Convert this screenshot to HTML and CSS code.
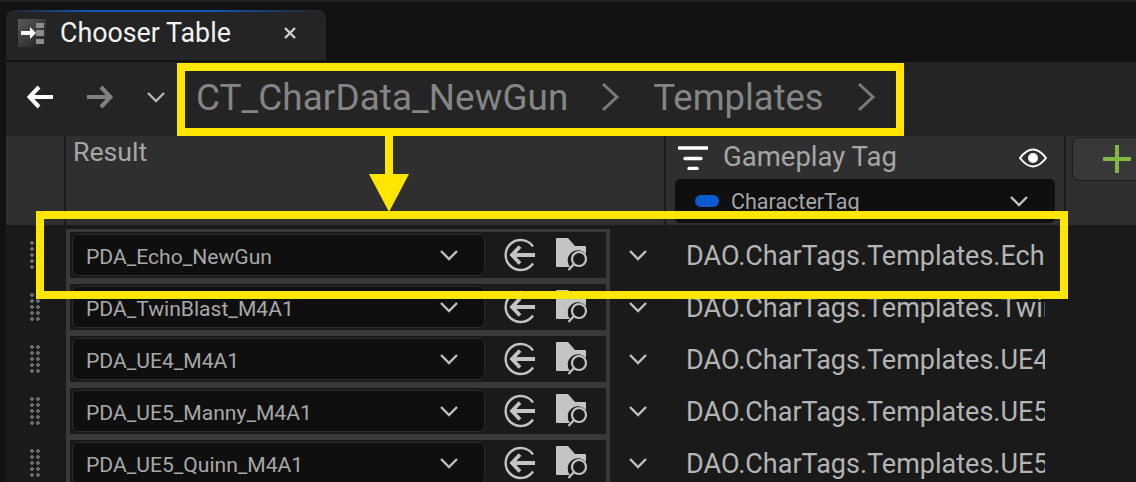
FILE: index.html
```html
<!DOCTYPE html>
<html lang="en">

<head>
    <meta charset="UTF-8">
    <title>Chooser Table</title>
    <link rel="stylesheet" href="styles.css">
</head>

<body>
    <svg class="defs" width="0" height="0">
        <symbol id="chev" viewBox="0 0 20 12">
            <path d="M2 2l8 8 8-8" fill="none" stroke="currentColor" stroke-width="2.4" />
        </symbol>
        <symbol id="use-sel" viewBox="0 0 32 34">
            <path d="M29 8.500A15 15 0 1 0 29 25.500" fill="none" stroke="currentColor" stroke-width="2.400" />
            <path d="M16 8.500L8 17l8 8.500M9 17H31" fill="none" stroke="currentColor" stroke-width="3.800" />
        </symbol>
        <symbol id="browse" viewBox="0 0 32 34">
            <path d="M0 1q0-1 1-1h11l7 8h10q1 0 1 1v7a10 10 0 0 0-16 13H1q-1 0-1-1z" fill="currentColor" />
            <circle cx="23" cy="21" r="7" fill="none" stroke="currentColor" stroke-width="2.200" />
            <path d="M18 26l-5.500 6" fill="none" stroke="currentColor" stroke-width="2.200" />
        </symbol>
    </svg>

    <div class="top-strip"></div>
    <div class="tabbar">
        <div class="tab">
            <svg class="tab-icon" viewBox="0 0 28 28">
                <defs>
                    <linearGradient id="tabg" x1="0" y1="0" x2="1" y2="1">
                        <stop offset="0" stop-color="#5a5a5a" />
                        <stop offset="1" stop-color="#1e1e1e" />
                    </linearGradient>
                </defs>
                <rect width="28" height="28" fill="url(#tabg)" />
                <path d="M18 4h8v5h-8zM18 11h8v6h-8zM18 20h8v5h-8z" fill="#8c8c8c" />
                <path d="M3 12h9V8l6 6-6 6v-4H3z" fill="#fff" />
            </svg>
            <span class="tab-title">Chooser Table</span>
            <svg class="tab-close" viewBox="0 0 14 14">
                <path d="M2 2l10 10M12 2L2 12" stroke="#cfcfcf" stroke-width="2.400" />
            </svg>
        </div>
    </div>

    <div class="main">
        <div class="toolbar">
            <svg class="nav-arrow back" viewBox="0 0 26 24">
                <path d="M12 2L2.500 12l9.500 10M3 12h23" fill="none" stroke="currentColor" stroke-width="4" />
            </svg>
            <svg class="nav-arrow forward" viewBox="0 0 26 24">
                <path d="M14 2l9.500 10L14 22M23 12H0" fill="none" stroke="currentColor" stroke-width="4" />
            </svg>
            <svg class="nav-chev">
                <use href="#chev" />
            </svg>
            <span class="crumb first">CT_CharData_NewGun</span>
            <svg class="crumb-sep" viewBox="0 0 20 30">
                <path d="M3 2l14 13L3 28" fill="none" stroke="currentColor" stroke-width="3" />
            </svg>
            <span class="crumb">Templates</span>
            <svg class="crumb-sep" viewBox="0 0 20 30">
                <path d="M3 2l14 13L3 28" fill="none" stroke="currentColor" stroke-width="3" />
            </svg>
        </div>

        <div class="header">
            <div class="head-gutter"></div>
            <div class="head-result">Result</div>
            <div class="head-tag">
                <div class="head-tag-top">
                    <svg class="filter-icon" viewBox="0 0 30 24">
                        <path d="M1 2h28M7 12.500h16M11 22.500h8" fill="none" stroke="#fff" stroke-width="3.400" stroke-linecap="round" />
                    </svg>
                    <span class="head-tag-label">Gameplay Tag</span>
                    <svg class="eye-icon" viewBox="0 0 28 20">
                        <path d="M1 10Q14-7 27 10 14 27 1 10z" fill="none" stroke="#fff" stroke-width="2" />
                        <circle cx="14" cy="10" r="5" fill="#fff" />
                    </svg>
                </div>
                <div class="tag-combo">
                    <span class="tag-pill"></span>
                    <span class="tag-name">CharacterTag</span>
                    <svg class="combo-chev">
                        <use href="#chev" />
                    </svg>
                </div>
            </div>
            <div class="head-add">
                <div class="add-btn">
                    <svg class="plus-icon" viewBox="0 0 28 28">
                        <path d="M14 1v26M1 14h26" stroke="#80b843" stroke-width="4" stroke-linecap="round" />
                    </svg>
                </div>
            </div>
        </div>

        <div class="rows">
            <div class="row">
                <div class="gutter"><span class="grip"></span></div>
                <div class="result-cell">
                    <div class="asset-combo">
                        <span class="asset-name">PDA_Echo_NewGun</span>
                        <svg class="combo-chev"><use href="#chev" /></svg>
                    </div>
                    <svg class="use-icon"><use href="#use-sel" /></svg>
                    <svg class="browse-icon"><use href="#browse" /></svg>
                </div>
                <svg class="row-chev"><use href="#chev" /></svg>
                <div class="tag-text">DAO.CharTags.Templates.Echo</div>
            </div>
            <div class="row">
                <div class="gutter"><span class="grip"></span></div>
                <div class="result-cell">
                    <div class="asset-combo">
                        <span class="asset-name">PDA_TwinBlast_M4A1</span>
                        <svg class="combo-chev"><use href="#chev" /></svg>
                    </div>
                    <svg class="use-icon"><use href="#use-sel" /></svg>
                    <svg class="browse-icon"><use href="#browse" /></svg>
                </div>
                <svg class="row-chev"><use href="#chev" /></svg>
                <div class="tag-text">DAO.CharTags.Templates.TwinBlast</div>
            </div>
            <div class="row">
                <div class="gutter"><span class="grip"></span></div>
                <div class="result-cell">
                    <div class="asset-combo">
                        <span class="asset-name">PDA_UE4_M4A1</span>
                        <svg class="combo-chev"><use href="#chev" /></svg>
                    </div>
                    <svg class="use-icon"><use href="#use-sel" /></svg>
                    <svg class="browse-icon"><use href="#browse" /></svg>
                </div>
                <svg class="row-chev"><use href="#chev" /></svg>
                <div class="tag-text">DAO.CharTags.Templates.UE4_M4A1</div>
            </div>
            <div class="row">
                <div class="gutter"><span class="grip"></span></div>
                <div class="result-cell">
                    <div class="asset-combo">
                        <span class="asset-name">PDA_UE5_Manny_M4A1</span>
                        <svg class="combo-chev"><use href="#chev" /></svg>
                    </div>
                    <svg class="use-icon"><use href="#use-sel" /></svg>
                    <svg class="browse-icon"><use href="#browse" /></svg>
                </div>
                <svg class="row-chev"><use href="#chev" /></svg>
                <div class="tag-text">DAO.CharTags.Templates.UE5_Manny</div>
            </div>
            <div class="row">
                <div class="gutter"><span class="grip"></span></div>
                <div class="result-cell">
                    <div class="asset-combo">
                        <span class="asset-name">PDA_UE5_Quinn_M4A1</span>
                        <svg class="combo-chev"><use href="#chev" /></svg>
                    </div>
                    <svg class="use-icon"><use href="#use-sel" /></svg>
                    <svg class="browse-icon"><use href="#browse" /></svg>
                </div>
                <svg class="row-chev"><use href="#chev" /></svg>
                <div class="tag-text">DAO.CharTags.Templates.UE5_Quinn</div>
            </div>
        </div>
    </div>

    <!-- yellow annotation drawn on top of the screenshot -->
    <div class="mark mark-crumbs"></div>
    <div class="mark mark-row"></div>
    <div class="mark-shaft"></div>
    <div class="mark-head"></div>
</body>

</html>
```

FILE: styles.css
```css
html,
body {
    height: 482px;
    overflow: hidden;
}

body {
    position: relative;
    margin: 0;
    background: #121212;
    font-family: Roboto, "Liberation Sans", sans-serif;
}

.defs {
    position: absolute;
}

.top-strip {
    height: 2px;
    background: #202020;
}

.tabbar {
    display: flex;
    height: 58px;
    padding: 8px 0 0 6px;
    box-sizing: border-box;
}

.tab {
    display: flex;
    align-items: center;
    width: 320px;
    height: 50px;
    box-sizing: border-box;
    padding: 0 0 4px 12px;
    background: linear-gradient(90deg, #242424, #0d58b4 25%, #0d58b4 65%, #242424) top / 100% 2px no-repeat, #242424;
    border-radius: 8px 8px 0 0;
}

.tab-icon {
    width: 28px;
    height: 28px;
    flex: none;
}

.tab-title {
    margin-left: 14px;
    font-size: 26.8px;
    color: #f2f2f2;
}

.tab-close {
    width: 14px;
    height: 14px;
    margin-left: 52px;
}

.main {
    margin: 2px 0 0 6px;
}

.toolbar {
    display: flex;
    align-items: center;
    height: 74px;
    box-sizing: border-box;
    padding-bottom: 4px;
    background: #242424;
}

.nav-arrow {
    width: 26px;
    height: 24px;
    flex: none;
}

.back {
    margin-left: 21px;
    color: #fff;
}

.forward {
    margin-left: 34px;
    color: #808080;
}

.nav-chev {
    width: 20px;
    height: 12px;
    margin-left: 33px;
    color: #b4b4b4;
}

.crumb {
    font-size: 36.4px;
    color: #858585;
}

.first {
    margin-left: 30px;
    font-size: 36.8px;
    letter-spacing: 0.1px;
}

.crumb-sep {
    width: 20px;
    height: 30px;
    margin: 0 33px 0 32px;
    color: #7a7a7a;
}

.header {
    display: flex;
    height: 89px;
    background: #2f2f2f;
}

.head-gutter {
    width: 58px;
    flex: none;
    border-right: 2px solid #1a1a1a;
}

.head-result {
    width: 600px;
    flex: none;
    box-sizing: border-box;
    padding: 0 0 0 7px;
    border-right: 2px solid #1a1a1a;
    font-size: 26.7px;
    line-height: 32px;
    color: #a6a6a6;
}

.head-tag {
    width: 400px;
    flex: none;
    border-right: 2px solid #1a1a1a;
    padding: 0 9px;
    box-sizing: border-box;
}

.head-tag-top {
    display: flex;
    align-items: center;
    height: 43px;
}

.filter-icon {
    width: 30px;
    height: 24px;
    margin-left: 3px;
}

.head-tag-label {
    margin: 0 0 2px 15px;
    font-size: 27.5px;
    color: #a6a6a6;
}

.eye-icon {
    width: 28px;
    height: 20px;
    margin-left: auto;
    margin-right: 8px;
}

.tag-combo {
    display: flex;
    align-items: center;
    height: 44px;
    padding: 0 26px 0 20px;
    background: #0f0f0f;
    border-radius: 5px;
}

.tag-pill {
    width: 24px;
    height: 12px;
    border-radius: 6px;
    background: #0a5bd0;
}

.tag-name {
    margin-left: 12px;
    font-size: 21.5px;
    color: #a6a6a6;
}

.tag-combo .combo-chev {
    margin-left: auto;
}

.head-add {
    padding: 2px 0 0 7px;
}

.add-btn {
    display: flex;
    align-items: center;
    justify-content: center;
    width: 88px;
    height: 42px;
    background: #383838;
    border-radius: 6px;
    box-shadow: 0 0 0 1px #1c1c1c;
}

.plus-icon {
    width: 28px;
    height: 28px;
}

.rows {
    padding-top: 4px;
    background: #1a1a1a;
}

.row {
    display: flex;
    align-items: center;
    height: 52px;
}

.gutter {
    display: flex;
    justify-content: center;
    width: 60px;
    flex: none;
}

.grip {
    width: 12px;
    height: 30px;
    margin-right: 2px;
    background-image: radial-gradient(circle, #6a6a6a 1.7px, transparent 1.9px);
    background-size: 6px 6px;
}

.result-cell {
    display: flex;
    align-items: center;
    width: 544px;
    height: 52px;
    flex: none;
    box-sizing: border-box;
    border: solid #393939;
    border-width: 3px 4px;
}

.asset-combo {
    display: flex;
    align-items: center;
    width: 413px;
    height: 42px;
    margin-left: 2px;
    box-sizing: border-box;
    padding: 0 25px 0 13px;
    background: #0f0f0f;
    border: 1px solid #2b2b2b;
    border-radius: 6px;
}

.asset-name {
    position: relative;
    top: 1px;
    font-size: 21.1px;
    color: #a8a8a8;
}

.asset-combo .combo-chev {
    margin-left: auto;
}

.combo-chev {
    width: 20px;
    height: 12px;
    flex: none;
    color: #c0c0c0;
}

.use-icon {
    width: 32px;
    height: 34px;
    margin-left: 19px;
    flex: none;
    color: #c4c4c4;
}

.browse-icon {
    width: 32px;
    height: 34px;
    margin-left: 20px;
    flex: none;
    color: #c4c4c4;
}

.row-chev {
    width: 20px;
    height: 12px;
    margin-left: 18px;
    flex: none;
    color: #c0c0c0;
}

.tag-text {
    width: 359px;
    margin-left: 38px;
    padding-top: 2px;
    overflow: hidden;
    white-space: nowrap;
    font-size: 27px;
    color: #b4b4b4;
}

.mark {
    position: absolute;
    box-sizing: border-box;
    border: 8px solid #ffe600;
}

.mark-crumbs {
    left: 177px;
    top: 63px;
    width: 727px;
    height: 73px;
}

.mark-row {
    left: 36px;
    top: 211px;
    width: 1032px;
    height: 88px;
}

.mark-shaft {
    position: absolute;
    left: 385px;
    top: 136px;
    width: 8px;
    height: 40px;
    background: #ffe600;
}

.mark-head {
    position: absolute;
    left: 369px;
    top: 174px;
    width: 0;
    height: 0;
    border-left: 20px solid transparent;
    border-right: 20px solid transparent;
    border-top: 38px solid #ffe600;
}
```
